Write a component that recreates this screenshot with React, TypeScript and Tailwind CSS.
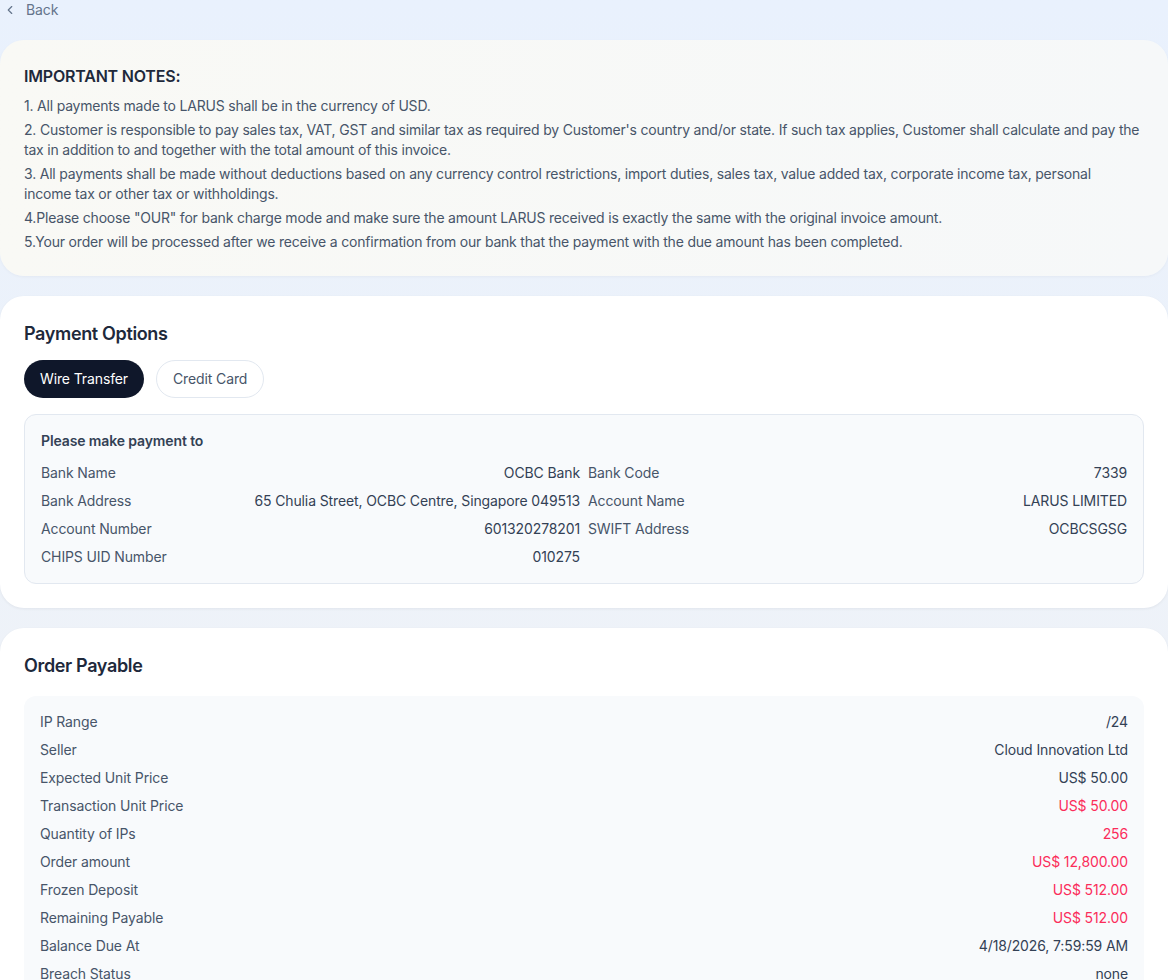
import React from "react";

const notes = [
  "1. All payments made to LARUS shall be in the currency of USD.",
  "2. Customer is responsible to pay sales tax, VAT, GST and similar tax as required by Customer's country and/or state. If such tax applies, Customer shall calculate and pay the tax in addition to and together with the total amount of this invoice.",
  "3. All payments shall be made without deductions based on any currency control restrictions, import duties, sales tax, value added tax, corporate income tax, personal income tax or other tax or withholdings.",
  '4.Please choose "OUR" for bank charge mode and make sure the amount LARUS received is exactly the same with the original invoice amount.',
  "5.Your order will be processed after we receive a confirmation from our bank that the payment with the due amount has been completed.",
];

const bankLeft: [string, string][] = [
  ["Bank Name", "OCBC Bank"],
  ["Bank Address", "65 Chulia Street, OCBC Centre, Singapore 049513"],
  ["Account Number", "601320278201"],
  ["CHIPS UID Number", "010275"],
];
const bankRight: [string, string][] = [
  ["Bank Code", "7339"],
  ["Account Name", "LARUS LIMITED"],
  ["SWIFT Address", "OCBCSGSG"],
];

const order: [string, string, boolean][] = [
  ["IP Range", "/24", false],
  ["Seller", "Cloud Innovation Ltd", false],
  ["Expected Unit Price", "US$ 50.00", false],
  ["Transaction Unit Price", "US$ 50.00", true],
  ["Quantity of IPs", "256", true],
  ["Order amount", "US$ 12,800.00", true],
  ["Frozen Deposit", "US$ 512.00", true],
  ["Remaining Payable", "US$ 512.00", true],
  ["Balance Due At", "4/18/2026, 7:59:59 AM", false],
  ["Breach Status", "none", false],
];

function Row({ label, value }: { label: string; value: string }) {
  return (
    <div className="flex justify-between items-center h-5 gap-4">
      <span className="text-[#475569]">{label}</span>
      <span className="text-[#334155]">{value}</span>
    </div>
  );
}

export default function App() {
  return (
    <div
      className="min-h-[980px] bg-gradient-to-b from-[#e9f1fd] via-[#edf2f9] to-[#f1f3f7] text-sm tracking-[-0.12px]"
      style={{ fontFamily: "Inter, 'Noto Sans', sans-serif" }}
    >
      <div className="flex items-center h-5 pl-[3px] gap-[9px] text-[#64748b]">
        <svg width="14" height="14" viewBox="0 0 24 24" fill="none" stroke="currentColor" strokeWidth="2" strokeLinecap="round" strokeLinejoin="round">
          <path d="M15 18l-6-6 6-6" />
        </svg>
        <span>Back</span>
      </div>

      <div className="flex flex-col gap-5 mt-5">
        <div className="rounded-3xl bg-gradient-to-r from-[#f9f9f5] to-[#f6f8f9] p-6 shadow-[0_1px_3px_rgba(15,23,42,0.04)]">
          <h2 className="text-base leading-6 font-semibold text-[#1e293b] tracking-[-0.2px]">IMPORTANT NOTES:</h2>
          <div className="mt-2 mr-[3px] flex flex-col gap-1 text-[#475569] leading-5 tracking-[-0.2px]">
            {notes.map((n) => (
              <p key={n}>{n}</p>
            ))}
          </div>
        </div>

        <div className="rounded-3xl bg-white p-6 shadow-[0_1px_3px_rgba(15,23,42,0.06)]">
          <h2 className="text-lg leading-7 font-semibold text-[#1e293b] tracking-[-0.35px]">Payment Options</h2>
          <div className="mt-3 flex gap-3">
            <button className="h-[38px] px-4 rounded-full bg-[#0f172a] text-white">Wire Transfer</button>
            <button className="h-[38px] px-4 rounded-full border border-[#e2e8f0] bg-white text-[#475569]">Credit Card</button>
          </div>
          <div className="mt-4 rounded-xl border border-[#e2e8f0] bg-[#f8fafc] p-4">
            <div className="font-semibold text-[#334155] leading-5">Please make payment to</div>
            <div className="mt-3 grid grid-cols-2 gap-x-2">
              <div className="flex flex-col gap-2">
                {bankLeft.map(([l, v]) => (
                  <Row key={l} label={l} value={v} />
                ))}
              </div>
              <div className="flex flex-col gap-2">
                {bankRight.map(([l, v]) => (
                  <Row key={l} label={l} value={v} />
                ))}
              </div>
            </div>
          </div>
        </div>

        <div className="rounded-3xl bg-white p-6 shadow-[0_1px_3px_rgba(15,23,42,0.06)]">
          <h2 className="text-lg leading-7 font-semibold text-[#1e293b] tracking-[-0.35px]">Order Payable</h2>
          <div className="mt-4 rounded-xl bg-[#f8fafc] p-4 flex flex-col gap-2">
            {order.map(([l, v, red]) => (
              <div key={l} className="flex justify-between items-center h-5">
                <span className="text-[#475569]">{l}</span>
                <span className={red ? "text-[#fb2c5a]" : "text-[#334155]"}>{v}</span>
              </div>
            ))}
          </div>
        </div>
      </div>
    </div>
  );
}
